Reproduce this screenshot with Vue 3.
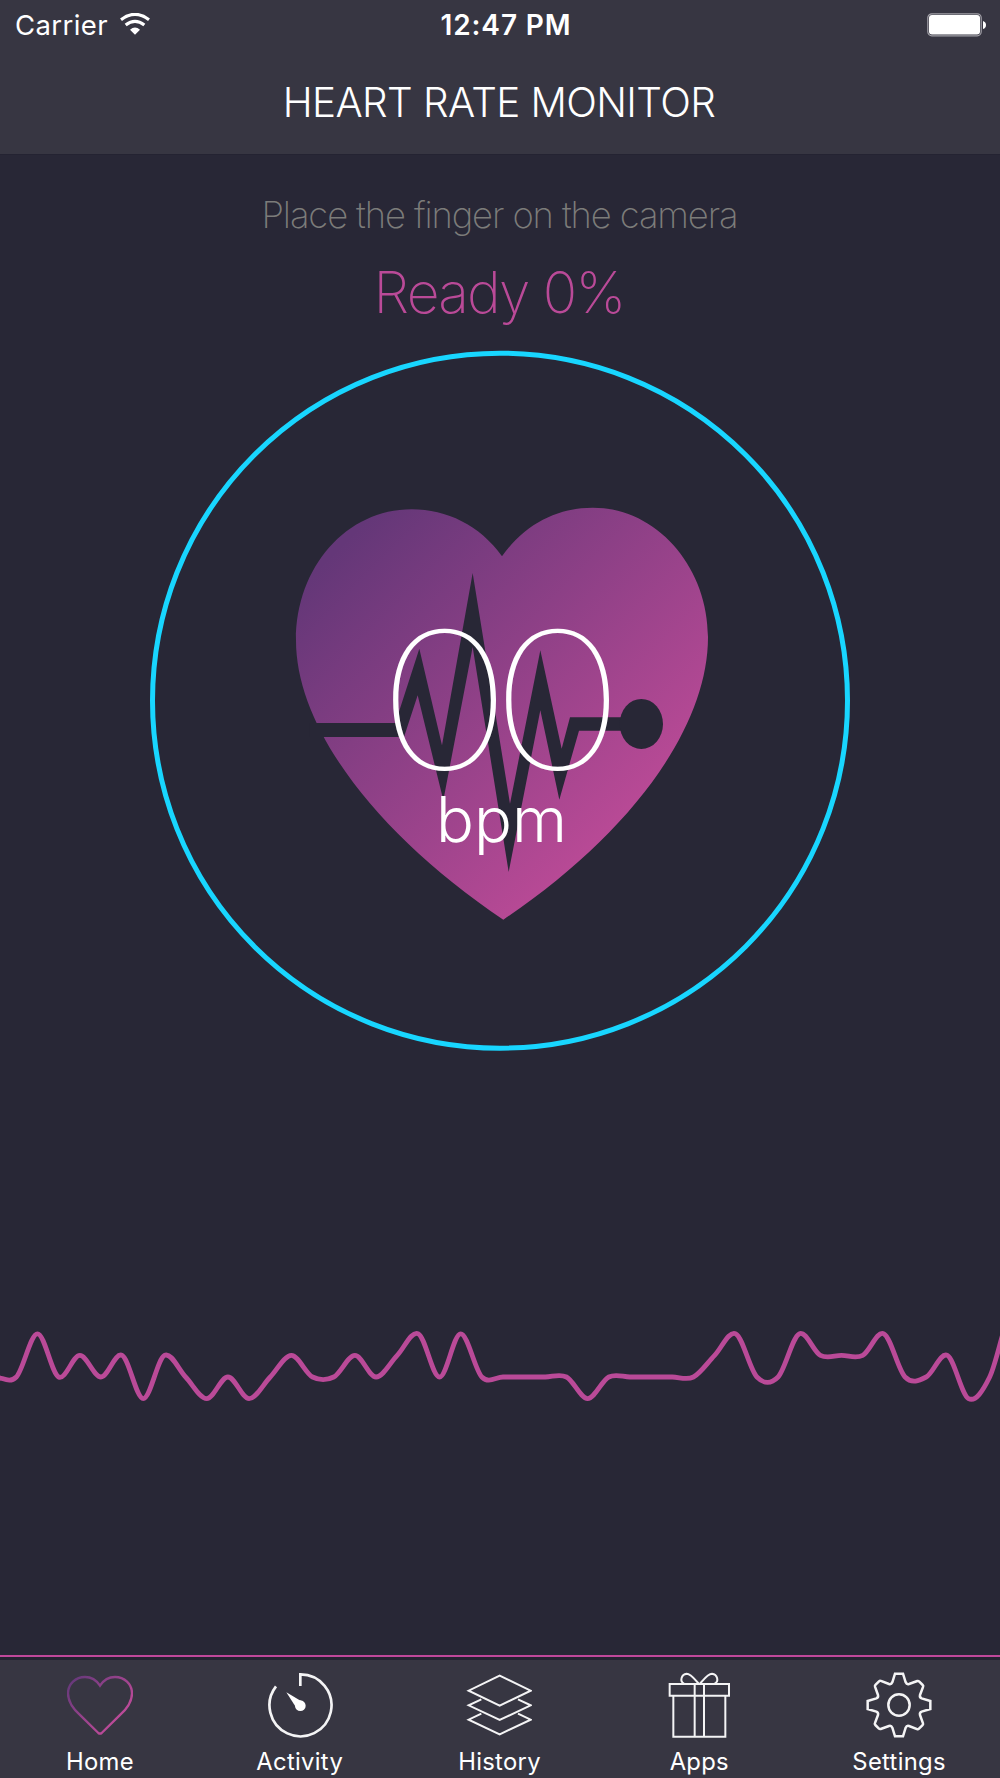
<template>
    <div class="screen">
        <header>
            <div class="status">
                <div class="carrier">
                    <span>Carrier</span>
                    <svg width="30" height="22" viewBox="0 0 90 66">
                        <path d="M3 20 Q45 -12 87 20" fill="none" stroke="#fff" stroke-width="9.5" />
                        <path d="M17 36 Q45 14 73 36" fill="none" stroke="#fff" stroke-width="9.5" />
                        <path d="M30 50 Q45 37 60 50 L45 65 Z" fill="#fff" />
                    </svg>
                </div>
                <span class="time">12:47 PM</span>
                <svg class="battery" width="60" height="24" viewBox="0 0 60 24">
                    <rect x="0.8" y="0.8" width="53.4" height="22" rx="4" fill="none" stroke="#a2a1a8" stroke-width="1.2" />
                    <rect x="2" y="2" width="51" height="19.5" rx="3" fill="#fff" />
                    <path d="M56 8 Q59 9 59 12 Q59 15 56 16 Z" fill="#fff" />
                </svg>
            </div>
            <h1>HEART RATE MONITOR</h1>
        </header>

        <main>
            <p class="hint">Place the finger on the camera</p>
            <p class="ready">Ready {{ progress }}%</p>
            <svg class="dial" width="700" height="702" viewBox="0 0 700 702">
                <defs>
                    <linearGradient id="heartFill" gradientUnits="userSpaceOnUse" x1="200" y1="150" x2="1050" y2="1000">
                        <stop offset="0" stop-color="#643778" />
                        <stop offset="1" stop-color="#ba4a96" />
                    </linearGradient>
                </defs>
                <circle cx="350" cy="350.7" r="347.5" fill="none" stroke="#18d6ff" stroke-width="5" />
                <g transform="translate(130 140.3) scale(0.33333)">
                    <path fill="url(#heartFill)" d="M666 198 C735 100 835 52 938 52 C1130 52 1284 230 1284 440 C1284 720 1040 1040 670 1288 C300 1040 48 720 48 450 C48 230 200 57 395 57 C500 57 600 105 666 198 Z" />
                    <path fill="#282736" d="M90 698 H346 L418 475 L486 765 L578 248 L690 940 L781 480 L845 775 L870 681 H1030 V721 H897 L838 928 L781 660 L686 1145 L578 470 L490 930 L413 615 L372 740 H90 Z" />
                    <ellipse cx="1084" cy="701" rx="65" ry="75" fill="#282736" />
                </g>
                <text class="rate" x="187.1 280.5" y="419.5" transform="scale(1.21 1)">{{ rate }}</text>
                <text class="unit" x="286" y="492" textLength="131" lengthAdjust="spacingAndGlyphs">bpm</text>
            </svg>
            <svg class="pulse" width="1000" height="90" viewBox="0 0 1000 90">
                <path :d="pulsePath" fill="none" stroke="#ba4a98" stroke-width="4.8" />
            </svg>
        </main>

        <nav>
            <a v-for="tab in tabs" :key="tab.name">
                <svg width="66" height="66" viewBox="0 0 198 198" fill="none" :stroke="tab.active ? 'url(#tabStroke)' : '#f4f4f5'">
                    <defs v-if="tab.active">
                        <linearGradient id="tabStroke" gradientUnits="userSpaceOnUse" x1="20" y1="20" x2="150" y2="140">
                            <stop offset="0" stop-color="#68397b" />
                            <stop offset="1" stop-color="#ba4a98" />
                        </linearGradient>
                    </defs>
                    <path v-for="d in tab.paths" :key="d" :d="d" :stroke-width="tab.stroke" />
                    <template v-if="tab.name === 'Activity'">
                        <path d="M58 61 L92 114 L112 93 Z" fill="#fff" stroke="none" />
                        <circle cx="100" cy="101" r="16" fill="#fff" stroke="none" />
                    </template>
                </svg>
                <span>{{ tab.name }}</span>
            </a>
        </nav>
    </div>
</template>

<script setup>
import { ref, computed } from 'vue';

    const progress = ref(0)
    const rate = ref('00')

    const samples = [
        0, 0, 0, 2, 0, 1, 0, 1, -1, 1, 0, -1, 0, -1, 0, 1, 0, 0, 1, 0, 1, 2, 0, 2, 0,
        0, 0, 0, 0, -1, 0, 0, 0, 0, 0, 1, 2, 0, 0, 2, 1, 1, 1, 2, 0, 0, 1, -1, 0, 3, 3
    ]

    //Smooth curve through every sample
    const pulsePath = computed(() => {
        const pts = samples.map((v, i) => [-26 + i * 21.16, 57 - v * 21.6])
        let d = `M${pts[1][0]} ${pts[1][1]}`
        for (let i = 1; i < pts.length - 2; i++) {
            const [a, b, c, e] = pts.slice(i - 1, i + 3)
            d += ` C${b[0] + (c[0] - a[0]) / 6} ${b[1] + (c[1] - a[1]) / 6}`
            d += ` ${c[0] - (e[0] - b[0]) / 6} ${c[1] - (e[1] - b[1]) / 6} ${c[0]} ${c[1]}`
        }
        return d
    })

    const tabs = [
        {
            name: 'Home',
            active: true,
            stroke: 7,
            paths: ['M99 41 C110 24 126 15 144 15 C172 15 195 36 195 64 C195 90 178 112 160 128 L104 183 Q99 187 94 183 L38 128 C20 112 3 90 3 64 C3 36 26 15 54 15 C72 15 88 24 99 41 Z']
        },
        {
            name: 'Activity',
            stroke: 8,
            paths: ['M100 42 V7 A93 93 0 1 1 27 43']
        },
        {
            name: 'History',
            stroke: 6,
            paths: [
                'M101 11 L194 56 L101 101 L8 56 Z',
                'M46 82 L8 100 L101 144 L194 100 L156 82',
                'M46 125 L8 143 L101 187 L194 143 L156 125'
            ]
        },
        {
            name: 'Apps',
            stroke: 6,
            paths: [
                'M11 36 H189 V71 H11 Z',
                'M22 71 V194 H178 V71',
                'M86 36 V194 M114 36 V194',
                'M98 35 C88 24 75 5 62 5 C46 7 40 28 54 35',
                'M102 35 C112 24 125 5 138 5 C154 7 160 28 146 35'
            ]
        },
        {
            name: 'Settings',
            stroke: 7.5,
            paths: [
                'M87 5 H111 L119 31 Q122 38 129 36 L154 27 Q157 26 160 29 L170 39 Q173 42 171 45 L162 69 Q160 76 167 79 L193 87 V111 L167 119 Q160 122 162 129 L171 154 Q172 157 169 160 L159 170 Q156 173 153 171 L129 162 Q122 160 119 167 L111 193 H87 L79 167 Q76 160 69 162 L44 171 Q41 172 38 169 L28 159 Q25 156 27 153 L36 129 Q38 122 31 119 L5 111 V87 L31 79 Q38 76 36 69 L27 44 Q26 41 29 38 L39 28 Q42 25 45 27 L69 36 Q76 38 79 31 Z',
                'M131 99 A32 32 0 1 1 67 99 A32 32 0 1 1 131 99'
            ]
        }
    ]
</script>

<style>
    body {
        margin: 0;
        background-color: #282736;
    }
</style>

<style scoped>
    .screen {
        display: flex;
        flex-direction: column;
        width: 1000px;
        height: 1778px;
        overflow: hidden;
        background-color: #282736;
        color: #fff;
        font-family: Inter, "Liberation Sans", sans-serif;
    }
    header {
        height: 155px;
        background-color: #373642;
        border-bottom: 1px solid #242332;
        box-sizing: border-box;
    }
    .status {
        display: grid;
        grid-template-columns: 1fr auto 1fr;
        align-items: center;
        height: 50px;
        padding: 0 13px 0 15px;
    }
    .carrier {
        display: flex;
        align-items: center;
        gap: 12px;
        font-size: 27.5px;
        letter-spacing: 0.4px;
    }
    .carrier svg {
        margin-top: -2px;
    }
    .time {
        font-size: 28px;
        font-weight: 600;
        padding-left: 10px;
        letter-spacing: 0.9px;
    }
    .battery {
        justify-self: end;
    }
    h1 {
        margin: 0;
        text-align: center;
        font-size: 40.4px;
        font-weight: 300;
        line-height: 50px;
        padding: 28px 2px 0 0;
        letter-spacing: -0.6px;
    }
    main {
        display: flex;
        flex-direction: column;
        align-items: center;
        flex: 1;
    }
    p {
        margin: 0;
    }
    .hint {
        margin-top: 35px;
        font-size: 36.4px;
        font-weight: 250;
        line-height: 50px;
        color: #7c7c7a;
        letter-spacing: -1.12px;
        padding-right: 1px;
    }
    .ready {
        margin-top: 13px;
        font-size: 57px;
        font-weight: 200;
        line-height: 80px;
        color: #ba4a98;
        letter-spacing: -1.8px;
        padding-right: 2px;
    }
    .dial {
        margin-top: 17px;
        flex-shrink: 0;
    }
    .dial text {
        fill: #fff;
    }
    .rate {
        font-size: 190.5px;
        font-weight: 110;
    }
    .unit {
        font-size: 63px;
        font-weight: 300;
    }
    .pulse {
        margin-top: 268px;
    }
    nav {
        display: flex;
        height: 118px;
        padding: 0 1px 0 0;
        background-color: #373642;
        border-top: 3px solid #242332;
        box-shadow: 0 -2px 0 #c0489b;
    }
    nav a {
        flex: 1;
        display: flex;
        flex-direction: column;
        align-items: center;
        padding-top: 12px;
        font-size: 23.8px;
        line-height: 30px;
        letter-spacing: 0.3px;
    }
    nav span {
        margin-top: 9px;
    }
</style>
